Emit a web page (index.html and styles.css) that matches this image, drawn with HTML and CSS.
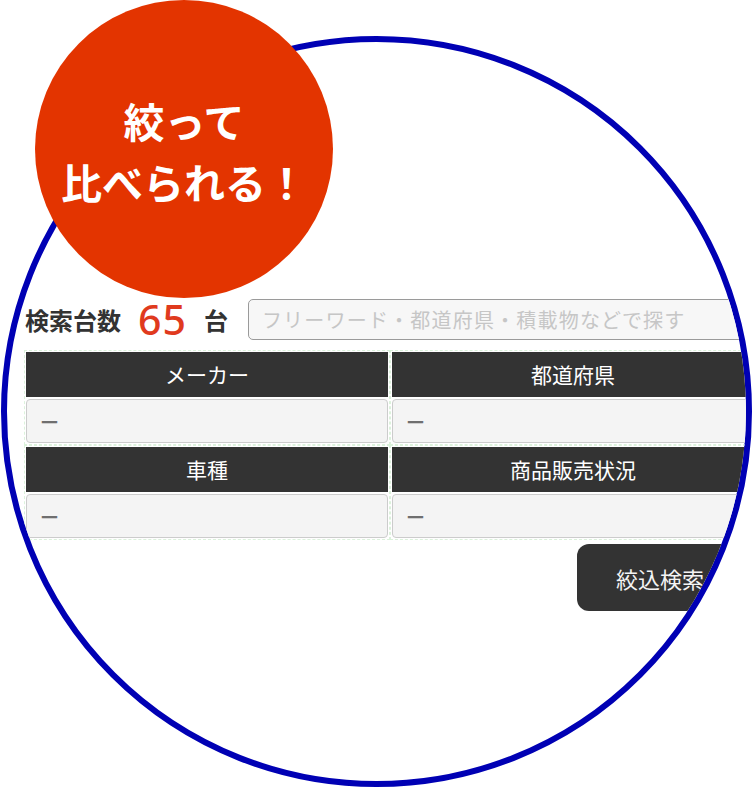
FILE: index.html
```html
<!DOCTYPE html>
<html lang="ja">
<head>
<meta charset="utf-8">
<title>絞って比べられる！</title>
<link rel="stylesheet" href="styles.css">
</head>
<body>
<div class="stage">
  <div class="ring">
    <div class="ui">
      <div class="countbar">
        <span class="label">検索台数</span>
        <span class="num">65</span>
        <span class="unit">台</span>
        <input class="search" type="text" placeholder="フリーワード・都道府県・積載物などで探す">
      </div>
      <div class="grid">
        <div class="cell">
          <div class="head">メーカー</div>
          <div class="value">ー</div>
        </div>
        <div class="cell">
          <div class="head">都道府県</div>
          <div class="value">ー</div>
        </div>
        <div class="cell">
          <div class="head">車種</div>
          <div class="value">ー</div>
        </div>
        <div class="cell">
          <div class="head">商品販売状況</div>
          <div class="value">ー</div>
        </div>
      </div>
      <div class="actions">
        <button class="btn" type="button">絞込検索</button>
      </div>
    </div>
  </div>
  <div class="badge">
    <span class="badge-line">絞って</span>
    <span class="badge-line">比べられる！</span>
  </div>
</div>
</body>
</html>
```

FILE: styles.css
```css
* { box-sizing: border-box; }

html, body {
  margin: 0;
  padding: 0;
  background: #ffffff;
}

body {
  font-family: "Noto Sans CJK JP", "Noto Sans", sans-serif;
  width: 753px;
  height: 788px;
  overflow: hidden;
}

.stage {
  position: relative;
  width: 753px;
  height: 788px;
  padding-top: 36px;
  padding-left: 1px;
}

.ring {
  width: 751px;
  height: 751px;
  border: 6px solid #0000b4;
  border-radius: 50%;
  overflow: hidden;
  background: #ffffff;
}

.ui {
  padding-top: 257px;
  padding-left: 19px;
  width: 760px;
}

.countbar {
  display: flex;
  align-items: center;
  height: 41px;
}

.countbar > span {
  flex-shrink: 0;
  white-space: nowrap;
}

.label {
  font-size: 24px;
  font-weight: 700;
  color: #333333;
  margin-left: -1px;
  line-height: 1;
}

.num {
  font-family: "Noto Sans", sans-serif;
  font-size: 41px;
  font-weight: 500;
  color: #e03a1e;
  margin-left: 17px;
  line-height: 1;
  letter-spacing: 1px;
}

.unit {
  font-size: 24px;
  font-weight: 700;
  color: #333333;
  margin-left: 17px;
  line-height: 1;
}

.search {
  flex-shrink: 0;
  margin-left: 20px;
  width: 520px;
  height: 41px;
  border: 1px solid #9a9a9a;
  border-radius: 5px;
  background: #f7f7f7;
  padding: 0 0 0 13px;
  font-family: "Noto Sans CJK JP", sans-serif;
  font-size: 20px;
  letter-spacing: 1.2px;
  color: #333333;
  outline: none;
}

.search::placeholder {
  color: #c6c6c6;
}

.grid {
  margin-top: 12px;
  display: grid;
  grid-template-columns: 362px 362px;
  column-gap: 4px;
  row-gap: 4px;
}

.cell {
  display: flex;
  flex-direction: column;
  gap: 2px;
  outline: 1px dashed #dcf2dc;
  outline-offset: 1px;
}

.head {
  height: 45px;
  background: #333333;
  color: #ffffff;
  font-size: 21px;
  display: flex;
  align-items: center;
  justify-content: center;
  line-height: 1;
}

.value {
  height: 44px;
  background: #f4f4f4;
  border: 1px solid #cccccc;
  border-radius: 4px;
  color: #6f6f6f;
  font-size: 19px;
  font-weight: 500;
  display: flex;
  align-items: center;
  padding-left: 13px;
  line-height: 1;
}

.actions {
  display: flex;
  justify-content: flex-end;
  width: 728px;
  margin-top: 6px;
}

.btn {
  width: 177px;
  height: 67px;
  border: none;
  border-radius: 12px;
  background: #333333;
  color: #f4f4f4;
  font-family: "Noto Sans CJK JP", sans-serif;
  font-size: 22px;
  text-align: left;
  padding: 0 0 0 39px;
  line-height: 1;
}

.badge {
  position: absolute;
  left: 35px;
  top: 0;
  width: 298px;
  height: 298px;
  border-radius: 50%;
  background: #e33400;
  color: #ffffff;
  font-weight: 700;
  font-size: 41px;
  display: flex;
  flex-direction: column;
  align-items: center;
  justify-content: center;
  padding-top: 4px;
}

.badge-line {
  line-height: 61px;
  white-space: nowrap;
}
```
